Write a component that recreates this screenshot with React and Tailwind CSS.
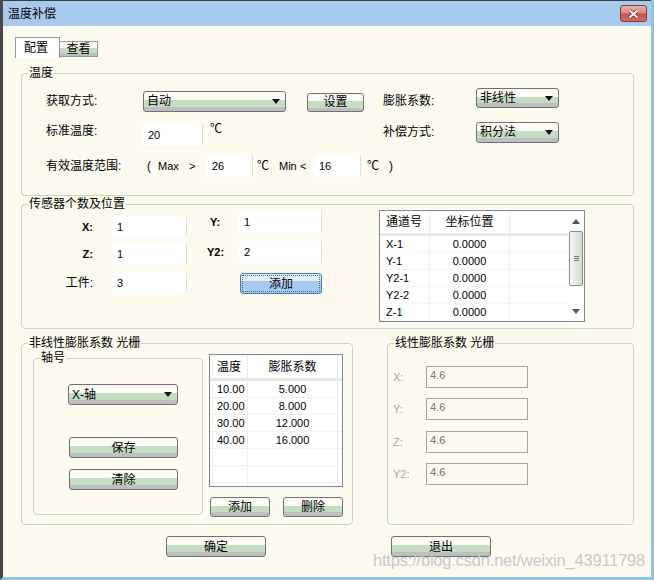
import React from 'react';

// shared looks of the XP-style controls
const bar = 'bg-[linear-gradient(to_bottom,#fdfbf4_0%,#fdfbf4_44%,#c5dcc5_44%,#c5dcc5_80%,#bfbfbf_80%,#bfbfbf_100%)]';

function Arrow({ up = false, color = '#111' }) {
  return (
    <svg width="8" height="5" viewBox="0 0 8 5">
      <path d={up ? 'M0 5h8L4 0z' : 'M0 0h8L4 5z'} fill={color} />
    </svg>
  );
}

function Combo({ text, className = '' }) {
  return (
    <div className={`flex items-center justify-between rounded-[3px] border border-[#6f7177] pl-[3px] pr-[5px] ${bar} ${className}`}>
      <span className="leading-none">{text}</span>
      <Arrow />
    </div>
  );
}

function Btn({ text, className = '' }) {
  return (
    <div className={`flex items-center justify-center rounded-[3px] border border-[#6f7177] ${bar} ${className}`}>
      <span className="leading-none">{text}</span>
    </div>
  );
}

function Field({ value, className = '' }) {
  return (
    <div className={`flex items-center border border-transparent border-r-[#e2ded2] bg-white pl-[4px] text-[11px] ${className}`}>{value}</div>
  );
}

function Group({ title, className = '', children }) {
  return (
    <div className={`relative rounded-[4px] border border-[#c6d7c2] ${className}`}>
      <span className="absolute left-[6px] top-[-8px] bg-[#fdfaf0] px-[1px] leading-[14px]">{title}</span>
      {children}
    </div>
  );
}

function Scrollbar() {
  return (
    <div className="flex w-[16px] flex-col">
      <div className="flex h-[20px] items-center justify-center">
        <Arrow up color="#555" />
      </div>
      <div className="ml-[1px] flex h-[55px] w-[14px] flex-col items-center justify-center gap-[1px] rounded-[2px] border border-[#8a8a8a] bg-[linear-gradient(to_right,#f6f8f4,#d2ddcd)]">
        <div className="h-[1px] w-[5px] bg-[#777]" />
        <div className="h-[1px] w-[5px] bg-[#777]" />
        <div className="h-[1px] w-[5px] bg-[#777]" />
      </div>
      <div className="flex-1" />
      <div className="flex h-[20px] items-center justify-center">
        <Arrow color="#555" />
      </div>
    </div>
  );
}

const channels = ['X-1', 'Y-1', 'Y2-1', 'Y2-2', 'Z-1'];
const coeffs = [
  ['10.00', '5.000'],
  ['20.00', '8.000'],
  ['30.00', '12.000'],
  ['40.00', '16.000'],
  ['', ''],
  ['', ''],
  ['', ''],
];

export default function App() {
  return (
    <div className="relative flex h-[580px] w-[654px] flex-col overflow-hidden border-b-[3px] border-l-[3px] border-r-[3px] border-b-[#8ec3e2] border-l-[#47494c] border-r-[#8ec3e2] bg-[#fdfaf0] font-['Liberation_Sans','Noto_Sans_CJK_SC',sans-serif] text-[12px] text-black">
      {/* title bar */}
      <div className="flex h-[26px] shrink-0 items-center justify-between border-t border-t-[#3d3d3d] bg-[#a8caef] pl-[5px] pr-[4px]">
        <span className="leading-none">温度补偿</span>
        <div className="flex h-[17px] w-[27px] items-center justify-center rounded-[3px] border border-[#7d3b3b] bg-[linear-gradient(to_bottom,#eab0a8_0%,#dc8a82_45%,#c8524c_55%,#d66c64_100%)]">
          <svg width="13" height="10" viewBox="0 0 13 10">
            <path d="M2.5 1.5l8 7M10.5 1.5l-8 7" stroke="#6a3030" strokeWidth="3.6" />
            <path d="M2.5 1.5l8 7M10.5 1.5l-8 7" stroke="#fff" strokeWidth="2" />
          </svg>
        </div>
      </div>

      {/* tabs */}
      <div className="ml-[12px] mt-[11px] flex h-[21px]">
        <div className="flex h-full w-[45px] items-center justify-center border border-b-0 border-[#8f9ba3] bg-white pr-[3px]">配置</div>
        <div className={`mb-[1px] flex h-[16px] w-[38px] items-center justify-center self-end border border-l-0 border-[#8f9ba3] ${bar}`}>查看</div>
      </div>

      <div className="flex flex-col pl-[18px]">
        {/* 温度 */}
        <Group title="温度" className="mt-[15px] flex h-[123px] w-[613px] flex-col pt-[15px]">
          <div className="flex h-[24px] items-center pl-[24px]">
            <span className="w-[97px]">获取方式:</span>
            <Combo text="自动" className="h-[21px] w-[143px]" />
            <Btn text="设置" className="ml-[21px] mt-[2px] h-[19px] w-[57px]" />
            <span className="ml-[19px] w-[93px]">膨胀系数:</span>
            <Combo text="非线性" className="mb-[6px] h-[20px] w-[83px]" />
          </div>
          <div className="mt-[7px] flex h-[24px] items-center pl-[24px]">
            <span className="mb-[3px] w-[97px]">标准温度:</span>
            <Field value="20" className="mt-[6px] h-[22px] w-[60px]" />
            <span className="mb-[6px] ml-[7px] w-[173px]">℃</span>
            <span className="w-[93px]">补偿方式:</span>
            <Combo text="积分法" className="h-[21px] w-[83px]" />
          </div>
          <div className="mt-[10px] flex h-[24px] items-center pl-[24px]">
            <span className="w-[101px]">有效温度范围:</span>
            <span className="w-[11px]">(</span>
            <span className="w-[31px] text-[11px]">Max</span>
            <span className="w-[18px] text-[11px]">&gt;</span>
            <Field value="26" className="h-[22px] w-[46px]" />
            <span className="ml-[4px] w-[22px]">℃</span>
            <span className="w-[21px] text-[11px]">Min</span>
            <span className="w-[14px] text-[11px]">&lt;</span>
            <Field value="16" className="h-[22px] w-[47px]" />
            <span className="ml-[6px] w-[22px]">℃</span>
            <span>)</span>
          </div>
        </Group>

        {/* 传感器个数及位置 */}
        <Group title="传感器个数及位置" className="mt-[8px] flex h-[125px] w-[613px] items-start">
          <div className="mt-[11px] flex flex-col">
            <div className="flex h-[22px] items-center">
              <span className="w-[71px] text-right text-[11px] font-bold">X:</span>
              <Field value="1" className="ml-[19px] h-[22px] w-[75px]" />
            </div>
            <div className="mt-[5px] flex h-[22px] items-center">
              <span className="w-[71px] text-right text-[11px] font-bold">Z:</span>
              <Field value="1" className="ml-[19px] h-[22px] w-[75px]" />
            </div>
            <div className="mt-[7px] flex h-[22px] items-center">
              <span className="w-[71px] text-right">工件:</span>
              <Field value="3" className="ml-[19px] h-[22px] w-[75px]" />
            </div>
          </div>
          <div className="ml-[20px] mt-[6px] flex flex-col">
            <div className="flex h-[22px] items-center">
              <span className="w-[32px] pl-[3px] text-[11px] font-bold">Y:</span>
              <Field value="1" className="h-[22px] w-[83px]" />
            </div>
            <div className="mt-[8px] flex h-[22px] items-center">
              <span className="w-[32px] text-[11px] font-bold">Y2:</span>
              <Field value="2" className="h-[22px] w-[83px]" />
            </div>
            <div className="mt-[10px] flex h-[21px] items-center">
              <span className="w-[33px]" />
              <div className="flex h-[21px] w-[82px] rounded-[3px] border border-[#3c7fb1] bg-[linear-gradient(to_bottom,#e4eefa_0%,#e4eefa_38%,#a9c9f0_38%,#a9c9f0_100%)] p-[1px]">
                <div className="flex h-full w-full items-center justify-center border border-dotted border-[#3f6f8f]">添加</div>
              </div>
            </div>
          </div>
          <div className="ml-[57px] mt-[5px] flex h-[112px] w-[206px] border border-[#828790] bg-white text-[11px]">
            <div className="flex w-[188px] flex-col">
              <div className="flex h-[25px] border-b-[3px] border-b-[#e4ebe0] text-[12px]">
                <div className="flex w-[50px] items-center border-r border-r-[#e6ede2] pl-[6px]">通道号</div>
                <div className="flex w-[80px] items-center justify-center border-r border-r-[#e6ede2]">坐标位置</div>
                <div className="w-[58px]" />
              </div>
              {channels.map((c) => (
                <div key={c} className="flex h-[17px] border-b border-b-[#f5f5f5]">
                  <div className="flex w-[50px] items-center border-r border-r-[#f0f0f0] pl-[6px]">{c}</div>
                  <div className="flex w-[80px] items-center justify-center border-r border-r-[#f0f0f0]">0.0000</div>
                  <div className="w-[58px]" />
                </div>
              ))}
            </div>
            <Scrollbar />
          </div>
        </Group>

        <div className="mt-[14px] flex">
          {/* 非线性膨胀系数 光栅 */}
          <Group title="非线性膨胀系数 光栅" className="flex h-[182px] w-[332px] items-start">
            <Group title="轴号" className="ml-[11px] mt-[14px] flex h-[157px] w-[170px] flex-col">
              <Combo text="X-轴" className="ml-[34px] mt-[25px] h-[21px] w-[110px]" />
              <Btn text="保存" className="ml-[35px] mt-[32px] h-[21px] w-[109px]" />
              <Btn text="清除" className="ml-[35px] mt-[11px] h-[21px] w-[109px]" />
            </Group>
            <div className="ml-[6px] mt-[10px] flex flex-col">
              <div className="flex h-[133px] w-[134px] flex-col overflow-hidden border border-[#828790] bg-white text-[11px]">
                <div className="flex h-[26px] shrink-0 border-b-[3px] border-b-[#e4ebe0] text-[12px]">
                  <div className="flex w-[38px] items-center border-r border-r-[#e6ede2] pl-[7px]">温度</div>
                  <div className="flex w-[90px] items-center justify-center border-r border-r-[#e6ede2]">膨胀系数</div>
                </div>
                {coeffs.map(([t, k], i) => (
                  <div key={i} className="flex h-[17px] shrink-0 border-b border-b-[#f0f0f0]">
                    <div className="flex w-[38px] items-center border-r border-r-[#f0f0f0] pl-[7px]">{t}</div>
                    <div className="flex w-[90px] items-center justify-center border-r border-r-[#f0f0f0]">{k}</div>
                  </div>
                ))}
              </div>
              <div className="mt-[10px] flex">
                <Btn text="添加" className="ml-[1px] h-[20px] w-[60px]" />
                <Btn text="删除" className="ml-[13px] h-[20px] w-[60px]" />
              </div>
            </div>
          </Group>

          {/* 线性膨胀系数 光栅 */}
          <Group title="线性膨胀系数 光栅" className="ml-[34px] flex h-[182px] w-[247px] flex-col pl-[5px] pt-[22px]">
            {[
              ['X:', ''],
              ['Y:', 'mt-[10px]'],
              ['Z:', 'mt-[11px]'],
              ['Y2:', 'mt-[10px]'],
            ].map(([l, m]) => (
              <div key={l} className={`flex h-[22px] items-center ${m}`}>
                <span className="w-[33px] text-[11px] text-[#a8a8a8]">{l}</span>
                <div className="flex h-[22px] w-[102px] items-center border border-[#a3a3a3] pb-[3px] pl-[3px] text-[11px] text-[#77776a]">4.6</div>
              </div>
            ))}
          </Group>
        </div>

        <div className="mt-[11px] flex">
          <Btn text="确定" className="ml-[145px] h-[21px] w-[100px]" />
          <Btn text="退出" className="ml-[125px] h-[21px] w-[100px]" />
        </div>
      </div>

      <span className="absolute left-[370px] top-[550px] text-[16.5px] leading-[20px] tracking-[-0.2px] text-[#c9c9c9]">https://blog.csdn.net/weixin_43911798</span>
    </div>
  );
}
